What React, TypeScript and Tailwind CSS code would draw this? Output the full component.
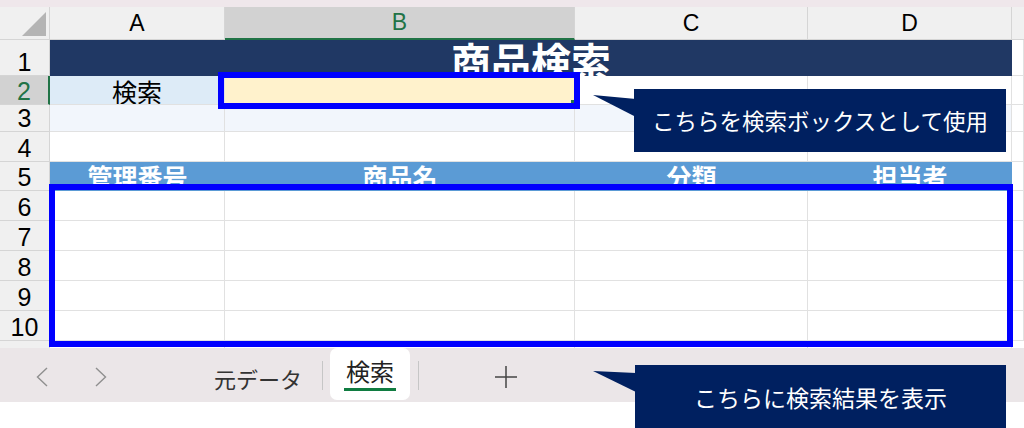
const latin = "font-['Liberation_Sans',Arial,sans-serif]";
const jp = "font-['Noto_Sans_CJK_JP','Noto_Sans',sans-serif]";
const grid = "shrink-0 border-r border-b border-[#e1e1e1]";

function RowHead({ n, selected = false }: { n: number; selected?: boolean }) {
  return (
    <div
      className={`${latin} flex w-[50px] shrink-0 items-end justify-center overflow-hidden border-b border-b-[#d5d5d5] text-[25px] leading-none ${
        selected
          ? "border-r-2 border-r-[#217346] bg-[#d2d2d2] text-[#217346]"
          : "border-r border-r-[#d5d5d5] bg-[#f0f0f0] text-black"
      }`}
    >
      {n}
    </div>
  );
}

function PlainRow({ n, h, fill = "bg-white" }: { n: number; h: string; fill?: string }) {
  return (
    <div className={`flex ${h}`}>
      <RowHead n={n} />
      <div className={`${grid} w-[175px] ${fill}`} />
      <div className={`${grid} w-[350px] ${fill}`} />
      <div className={`${grid} w-[233px] ${fill}`} />
      <div className={`${grid} w-[204px] ${fill}`} />
      <div className={`${grid} w-[12px]`} />
    </div>
  );
}

function HeadCell({ w, label }: { w: string; label: string }) {
  return (
    <div className={`flex ${w} shrink-0 items-center justify-center overflow-hidden bg-[#5b9bd5] pt-[2px]`}>
      <span className={`${jp} self-start text-[25px] font-bold leading-none text-white`}>{label}</span>
    </div>
  );
}

function Chevron({ dir }: { dir: "left" | "right" }) {
  return (
    <svg width="12" height="20" viewBox="0 0 12 20" className="shrink-0">
      <polyline
        points={dir === "left" ? "11,1 1.5,10 11,19" : "1,1 10.5,10 1,19"}
        fill="none"
        stroke="#8f8f8f"
        strokeWidth="1.4"
      />
    </svg>
  );
}

export default function App() {
  return (
    <div className="relative flex h-[428px] w-[1024px] flex-col overflow-hidden bg-white">
      {/* window strip */}
      <div className="h-[7px] shrink-0 bg-[#efe7eb]" />

      {/* column headers */}
      <div className={`${latin} flex h-[33px] shrink-0 text-[23px] leading-none`}>
        <div className="flex w-[50px] shrink-0 items-end justify-end border-r border-b border-[#d5d5d5] bg-[#f0f0f0] pr-[3px] pb-[3px]">
          <svg width="24" height="24" viewBox="0 0 24 24">
            <polygon points="24,0 24,24 0,24" fill="#b4b4b4" />
          </svg>
        </div>
        <div className="flex w-[175px] shrink-0 items-center justify-center border-r border-b border-[#d5d5d5] bg-[#f0f0f0] text-black">A</div>
        <div className="flex w-[350px] shrink-0 items-center justify-center border-r border-r-[#d5d5d5] border-b-2 border-b-[#217346] bg-[#d2d2d2] text-[#217346]">B</div>
        <div className="flex w-[233px] shrink-0 items-center justify-center border-r border-b border-[#d5d5d5] bg-[#f0f0f0] text-black">C</div>
        <div className="flex w-[204px] shrink-0 items-center justify-center border-r border-b border-[#d5d5d5] bg-[#f0f0f0] text-black">D</div>
        <div className="w-[12px] shrink-0 border-b border-[#d5d5d5] bg-[#f0f0f0]" />
      </div>

      {/* row 1: title */}
      <div className="flex h-[36px] shrink-0">
        <RowHead n={1} />
        <div className="flex w-[962px] shrink-0 justify-center overflow-hidden bg-[#203864]">
          <span className={`${jp} text-[40px] font-bold leading-none text-white`}>商品検索</span>
        </div>
        <div className={`${grid} w-[12px]`} />
      </div>

      {/* row 2: search */}
      <div className="flex h-[29px] shrink-0">
        <RowHead n={2} selected />
        <div className={`${grid} flex w-[175px] items-end justify-center overflow-hidden bg-[#ddebf7]`}>
          <span className={`${jp} text-[25px] leading-none text-black`}>検索</span>
        </div>
        <div className={`${grid} w-[350px] bg-[#fff2cc]`} />
        <div className={`${grid} w-[233px]`} />
        <div className={`${grid} w-[204px]`} />
        <div className={`${grid} w-[12px]`} />
      </div>

      <PlainRow n={3} h="h-[27px] shrink-0" fill="bg-[#f2f6fc]" />
      <PlainRow n={4} h="h-[30px] shrink-0" />

      {/* row 5: table header */}
      <div className="flex h-[29px] shrink-0">
        <RowHead n={5} />
        <HeadCell w="w-[175px]" label="管理番号" />
        <HeadCell w="w-[350px]" label="商品名" />
        <HeadCell w="w-[233px]" label="分類" />
        <HeadCell w="w-[204px]" label="担当者" />
        <div className={`${grid} w-[12px]`} />
      </div>

      {[6, 7, 8, 9, 10].map((n) => (
        <PlainRow key={n} n={n} h="h-[30px] shrink-0" />
      ))}

      {/* row 11 partially visible */}
      <div className="flex h-[7px] shrink-0 overflow-hidden">
        <div className={`${latin} flex w-[50px] shrink-0 justify-center border-r border-[#d5d5d5] bg-[#f0f0f0] pt-[4px] text-[25px] leading-none text-black`}>
          11
        </div>
        <div className="w-[175px] shrink-0 border-r border-[#e1e1e1]" />
        <div className="w-[350px] shrink-0 border-r border-[#e1e1e1]" />
        <div className="w-[233px] shrink-0 border-r border-[#e1e1e1]" />
        <div className="w-[204px] shrink-0 border-r border-[#e1e1e1]" />
      </div>

      {/* sheet tabs */}
      <div className={`${jp} flex h-[54px] shrink-0 items-center bg-[#ebe6e8]`}>
        <div className="ml-[36px] mt-[4px] flex">
          <Chevron dir="left" />
        </div>
        <div className="ml-[47px] mt-[4px] flex">
          <Chevron dir="right" />
        </div>
        <span className="ml-[107px] mt-[6px] text-[22px] leading-none text-[#333333]">元データ</span>
        <div className="ml-[20px] h-[29px] w-px bg-[#c6c6c6]" />
        <div className="ml-[7px] flex h-[52px] w-[80px] flex-col items-center justify-center self-start rounded-[7px] bg-white">
          <span className="mt-[1px] text-[24px] leading-none text-[#222222]">検索</span>
          <div className="mt-[5px] h-[3px] w-[52px] bg-[#107c41]" />
        </div>
        <div className="ml-[8px] h-[29px] w-px bg-[#c6c6c6]" />
        <svg width="22" height="22" viewBox="0 0 22 22" className="ml-[76px] mt-[4px]">
          <line x1="11" y1="0" x2="11" y2="22" stroke="#444444" strokeWidth="1.5" />
          <line x1="0" y1="11" x2="22" y2="11" stroke="#444444" strokeWidth="1.5" />
        </svg>
      </div>

      <div className="flex-1 bg-white" />

      {/* highlight boxes */}
      <div className="absolute left-[218px] top-[72px] h-[37px] w-[362px] border-[6px] border-[#0000ff]" />
      <div className="absolute left-[571px] top-[100px] h-[3px] w-[3px] bg-[#217346]" />
      <div className="absolute left-[49px] top-[184px] h-[163px] w-[964px] border-[6px] border-[#0000ff]" />

      {/* callout: search box */}
      <svg className="absolute left-[592px] top-[93px]" width="44" height="28" viewBox="0 0 44 28">
        <polygon points="1,2 44,6 44,24" fill="#002060" />
      </svg>
      <div className="absolute left-[634px] top-[89px] flex h-[63px] w-[372px] items-center justify-center bg-[#002060]">
        <span className={`${jp} text-[22.5px] leading-none text-white`}>こちらを検索ボックスとして使用</span>
      </div>

      {/* callout: results */}
      <svg className="absolute left-[592px] top-[369px]" width="44" height="26" viewBox="0 0 44 26">
        <polygon points="1,2 44,4 44,23" fill="#002060" />
      </svg>
      <div className="absolute left-[635px] top-[365px] flex h-[63px] w-[371px] items-center justify-center bg-[#002060] pt-[2px]">
        <span className={`${jp} text-[23px] leading-none text-white`}>こちらに検索結果を表示</span>
      </div>
    </div>
  );
}
